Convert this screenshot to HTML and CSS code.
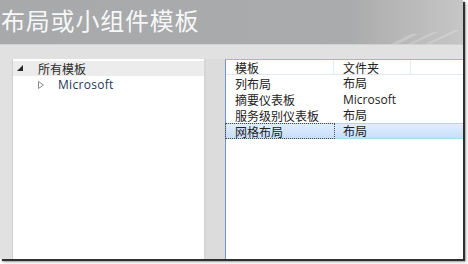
FILE: index.html
```html
<!DOCTYPE html>
<html lang="zh-CN">
<head>
<meta charset="utf-8">
<title>布局或小组件模板</title>
<link rel="stylesheet" href="styles.css">
</head>
<body>
<div class="frame">
  <div class="header">
    <h1 class="title">布局或小组件模板</h1>
    <svg class="streaks" width="70" height="14" viewBox="0 0 70 14">
      <path d="M0 14 L20 4 L27 4 L7 14 Z" fill="#ffffff" opacity="0.22"/>
      <path d="M17 14 L42 2 L47 2 L22 14 Z" fill="#ffffff" opacity="0.2"/>
      <path d="M34 14 L64 0 L69 0 L39 14 Z" fill="#ffffff" opacity="0.2"/>
    </svg>
  </div>
  <div class="body">
    <div class="tree">
      <div class="tree-row root">
        <svg class="exp" width="7" height="7" viewBox="0 0 7 7"><polygon points="6,0 6,6 0,6" fill="#262626"/></svg>
        <span class="root-label">所有模板</span>
      </div>
      <div class="tree-row child">
        <svg class="col" width="6" height="8" viewBox="0 0 6 8"><polygon points="0.5,0.5 5.5,4 0.5,7.5" fill="none" stroke="#8a8a8a" stroke-width="1"/></svg>
        <span class="child-label">Microsoft</span>
      </div>
    </div>
    <div class="splitter"></div>
    <div class="list">
      <div class="list-head">
        <span class="c1">模板</span>
        <span class="c2">文件夹</span>
        <span class="c3"></span>
      </div>
      <div class="list-row"><span class="c1">列布局</span><span class="c2">布局</span></div>
      <div class="list-row"><span class="c1">摘要仪表板</span><span class="c2">Microsoft</span></div>
      <div class="list-row"><span class="c1">服务级别仪表板</span><span class="c2">布局</span></div>
      <div class="list-row selected"><span class="c1 focus">网格布局</span><span class="c2">布局</span></div>
    </div>
  </div>
</div>
</body>
</html>
```

FILE: styles.css
```css
html, body {
  margin: 0;
  padding: 0;
  background: #ffffff;
}
body {
  width: 468px;
  height: 264px;
  overflow: hidden;
  font-family: "Noto Sans CJK SC", "Open Sans", sans-serif;
}
.frame {
  width: 463px;
  height: 259px;
  display: flex;
  flex-direction: column;
  box-shadow: 2px 2px 1px rgba(0, 0, 0, 0.75), 3px 3px 3px rgba(0, 0, 0, 0.3);
  overflow: hidden;
}
.header {
  height: 44px;
  flex: none;
  position: relative;
  background: linear-gradient(to right, #a7a9ab 0px, #a9abac 350px, #b0b0b0 370px, #c6c6c6 463px);
  display: flex;
  align-items: center;
}
.title {
  margin: 0 0 0 1px;
  font-weight: 400;
  font-size: 24px;
  letter-spacing: 0.8px;
  color: #f7f7f7;
  line-height: 1;
  padding-bottom: 4px;
}
.streaks {
  position: absolute;
  right: 2px;
  bottom: 0;
}
.body {
  flex: 1;
  display: flex;
  background: #e1e1e1;
  padding: 14px 0 0 12px;
  border-top: 1px solid #d2d2d2;
}
.tree {
  width: 192px;
  background: #ffffff;
  border-left: 1px solid #d0d0d0;
  padding-top: 2px;
  box-sizing: border-box;
}
.tree-row {
  height: 15px;
  display: flex;
  align-items: center;
  font-size: 12px;
}
.root {
  background: #ececec;
}
.exp {
  margin-left: 4px;
  margin-right: 14px;
}
.root-label {
  color: #2a2a2a;
}
.child {
  height: 17px;
}
.col {
  margin-left: 25px;
  margin-right: 14px;
}
.child-label {
  font-family: "Open Sans", sans-serif;
  font-size: 12px;
  color: #1f3658;
  letter-spacing: 0.3px;
}
.splitter {
  width: 19px;
  border-left: 2px solid #d6d6d6;
  background: #dcdcdc;
}
.list {
  flex: 1;
  background: #ffffff;
  border-left: 1px solid #6e98cc;
  border-top: 1px solid #9ab8dc;
  font-size: 12px;
  color: #222222;
}
.list-head, .list-row {
  display: flex;
  align-items: center;
}
.list-head {
  height: 14px;
  border-bottom: 1px solid #e2e9f1;
}
.list-head span {
  height: 100%;
  display: flex;
  align-items: center;
}
.list-head .c1, .list-head .c2 {
  border-right: 1px solid #e6ecf3;
}
.list-row {
  height: 16px;
}
.c1 {
  width: 108px;
  padding-left: 9px;
  box-sizing: border-box;
  flex: none;
}
.c2 {
  width: 77px;
  padding-left: 9px;
  box-sizing: border-box;
  flex: none;
}
.list-row .c2 {
  font-family: "Open Sans", "Noto Sans CJK SC", sans-serif;
}
.c3 {
  flex: 1;
}
.selected {
  background: linear-gradient(to bottom, #dfeefd, #c8defa);
  border-top: 1px solid #a9dbe8;
  border-bottom: 1px solid #a9dbe8;
  height: 14px;
}
.focus {
  height: 14px;
  display: flex;
  align-items: center;
  outline: 1px dotted #4a4a4a;
  outline-offset: 0px;
}
```
